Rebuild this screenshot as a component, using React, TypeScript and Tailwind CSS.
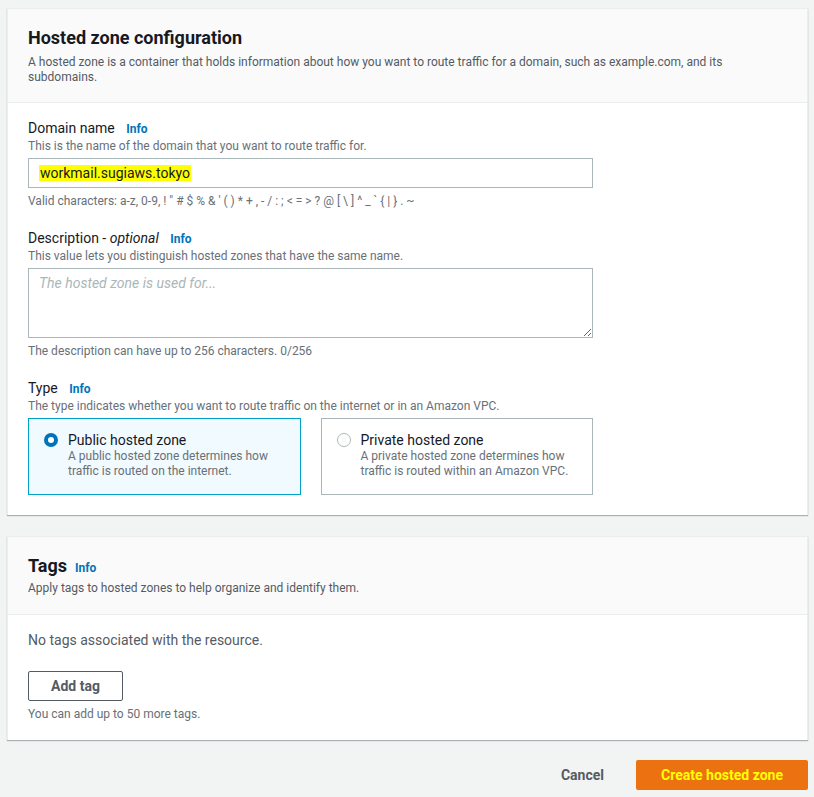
import { useState } from 'react';

function Info() {
  return <span className="ml-2 text-[12px] font-bold text-[#0073bb]">Info</span>;
}

function RadioCard({
  selected,
  title,
  text,
  onClick,
}: {
  selected: boolean;
  title: string;
  text: string;
  onClick: () => void;
}) {
  return (
    <div
      onClick={onClick}
      className={
        selected
          ? 'flex h-[77px] cursor-pointer gap-[10px] border border-[#00a1c9] bg-[#f1faff] px-[15px] pt-[12px]'
          : 'flex h-[77px] cursor-pointer gap-[10px] border border-[#aab7b8] bg-white px-[15px] pt-[12px]'
      }
    >
      <div className="pt-[2px]">
        {selected ? (
          <div className="h-[14px] w-[14px] rounded-full border-[4px] border-[#0073bb] bg-white" />
        ) : (
          <div className="h-[14px] w-[14px] rounded-full border border-[#aab7b8] bg-white" />
        )}
      </div>
      <div>
        <div className="text-[14px] leading-[18px] text-[#16191f]">{title}</div>
        <div className="text-[12px] leading-[15px] text-[#687078]">{text}</div>
      </div>
    </div>
  );
}

export default function App() {
  const [zone, setZone] = useState<'public' | 'private'>('public');

  return (
    <div
      className="min-h-[797px] bg-[#f2f3f3] pl-[7px] pr-[6px] pt-[8px]"
      style={{ fontFamily: 'Roboto, "Open Sans", sans-serif' }}
    >
      {/* Hosted zone configuration */}
      <div className="border-l border-r border-t border-[#eaeded] bg-white shadow-[0_1px_1px_0_rgba(0,28,36,0.3)]">
        <div className="h-[94px] border-b border-[#eaeded] bg-[#fafafa] px-[20px] pt-[18px]">
          <h2 className="text-[18px] font-bold leading-[22px] text-[#16191f]">Hosted zone configuration</h2>
          <p className="mt-[6px] text-[12px] leading-[15px] text-[#545b64]">
            A hosted zone is a container that holds information about how you want to route traffic for a domain, such as example.com, and its subdomains.
          </p>
        </div>

        <div className="px-[20px] pb-[20px] pt-[16px]">
          <div className="text-[14px] leading-[18px] text-[#16191f]">
            Domain name <Info />
          </div>
          <div className="text-[12px] leading-[16px] text-[#687078]">
            This is the name of the domain that you want to route traffic for.
          </div>
          <div className="mt-[4px] flex h-[30px] w-[565px] items-center border border-[#aab7b8] bg-white px-[10px]">
            <span className="bg-[#ffff00] px-[1px] text-[14px] leading-[16px] text-[#16191f]">workmail.sugiaws.tokyo</span>
          </div>
          <div className="mt-[5px] text-[12px] leading-[16px] text-[#687078]">
            Valid characters: a-z, 0-9, ! " # $ % &amp; ' ( ) * + , - / : ; &lt; = &gt; ? @ [ \ ] ^ _ ` {'{'} | {'}'} . ~
          </div>

          <div className="mt-[20px] text-[14px] leading-[18px] text-[#16191f]">
            Description - <i>optional</i> <Info />
          </div>
          <div className="text-[12px] leading-[16px] text-[#687078]">
            This value lets you distinguish hosted zones that have the same name.
          </div>
          <textarea
            className="mt-[4px] block h-[70px] w-[565px] border border-[#aab7b8] bg-white px-[10px] py-[4px] text-[14px] italic text-[#16191f] placeholder:text-[#aab7b8] outline-none"
            placeholder="The hosted zone is used for..."
          />
          <div className="mt-[5px] text-[12px] leading-[16px] text-[#687078]">
            The description can have up to 256 characters. 0/256
          </div>

          <div className="mt-[20px] text-[14px] leading-[18px] text-[#16191f]">
            Type <Info />
          </div>
          <div className="text-[12px] leading-[16px] text-[#687078]">
            The type indicates whether you want to route traffic on the internet or in an Amazon VPC.
          </div>
          <div className="mt-[4px] grid w-[565px] grid-cols-2 gap-[20px]">
            <RadioCard
              selected={zone === 'public'}
              onClick={() => setZone('public')}
              title="Public hosted zone"
              text="A public hosted zone determines how traffic is routed on the internet."
            />
            <RadioCard
              selected={zone === 'private'}
              onClick={() => setZone('private')}
              title="Private hosted zone"
              text="A private hosted zone determines how traffic is routed within an Amazon VPC."
            />
          </div>
        </div>
      </div>

      {/* Tags */}
      <div className="mt-[21px] border-l border-r border-t border-[#eaeded] bg-white shadow-[0_1px_1px_0_rgba(0,28,36,0.3)]">
        <div className="h-[78px] border-b border-[#eaeded] bg-[#fafafa] px-[20px] pt-[18px]">
          <h2 className="flex items-baseline text-[18px] font-bold leading-[22px] text-[#16191f]">
            Tags <Info />
          </h2>
          <p className="mt-[2px] text-[12px] leading-[15px] text-[#545b64]">
            Apply tags to hosted zones to help organize and identify them.
          </p>
        </div>
        <div className="px-[20px] pb-[18px] pt-[16px]">
          <div className="text-[14px] leading-[18px] text-[#545b64]">No tags associated with the resource.</div>
          <button className="mt-[22px] h-[30px] w-[95px] rounded-[2px] border border-[#545b64] bg-white text-[14px] font-bold text-[#545b64]">
            Add tag
          </button>
          <div className="mt-[5px] text-[12px] leading-[16px] text-[#687078]">You can add up to 50 more tags.</div>
        </div>
      </div>

      {/* Actions */}
      <div className="mt-[20px] flex items-center justify-end gap-[20px]">
        <button className="px-[12px] text-[14px] font-bold text-[#545b64]">Cancel</button>
        <button className="h-[30px] w-[172px] rounded-[2px] bg-[#ec7211] text-[14px] font-bold text-[#ffff00]">
          Create hosted zone
        </button>
      </div>
    </div>
  );
}
